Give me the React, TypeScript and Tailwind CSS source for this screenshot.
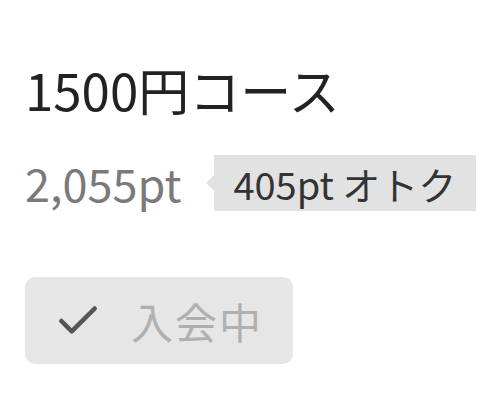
import { Check } from 'lucide-react'

const font = { fontFamily: '"Noto Sans CJK JP", "Noto Sans", sans-serif' }

export default function App() {
	return (
		<div className="w-[500px] h-[418px] bg-white px-[25px] pt-[58px]" style={font}>
			<h2 className="text-[51px] leading-[62px] text-[#222]">1500円コース</h2>
			<div className="flex items-center mt-[35px] h-[56px]">
				<span className="text-[45px] leading-[56px] text-[#7a7a7a] whitespace-nowrap">2,055pt</span>
				<span className="relative shrink-0 whitespace-nowrap ml-[33px] h-[56px] flex items-center bg-[#e2e2e2] pl-[19px] pr-[20px] text-[38px] text-[#333]">
					<span className="absolute left-[-8px] top-[20px] w-0 h-0 border-y-[8px] border-y-transparent border-r-[8px] border-r-[#e2e2e2]" />
					405pt オトク
				</span>
			</div>
			<button className="mt-[66px] w-[268px] h-[87px] rounded-[10px] bg-[#e6e6e6] flex items-center pl-[28px] gap-[28px]">
				<Check size={50} strokeWidth={2.2} color="#555" />
				<span className="text-[42px] text-[#b0b0b0] tracking-[2px]">入会中</span>
			</button>
		</div>
	)
}
